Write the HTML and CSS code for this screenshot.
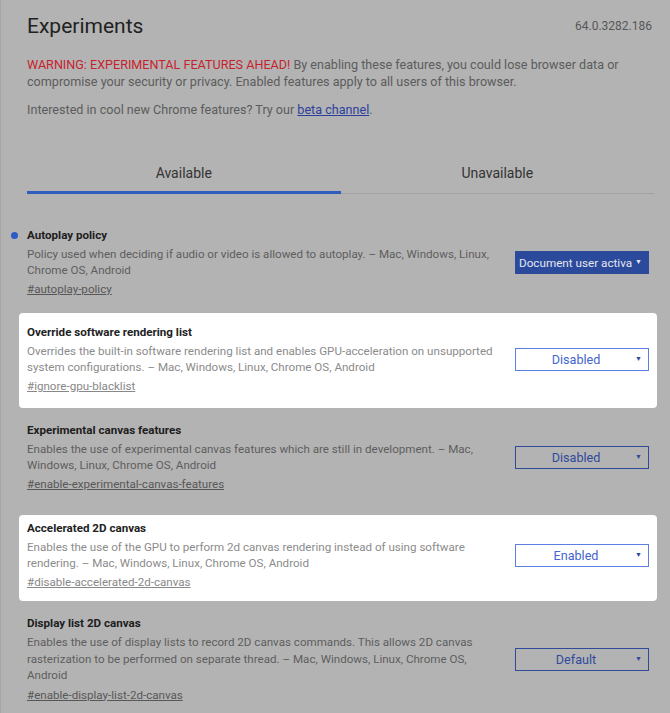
FILE: index.html
```html
<!DOCTYPE html>
<html>
<head>
<meta charset="utf-8">
<link rel="stylesheet" href="styles.css">
</head>
<body>
<div class="page">
  <header class="head">
    <h1 class="title">Experiments</h1>
    <span class="version">64.0.3282.186</span>
  </header>
  <p class="warning"><span class="warn-red">WARNING: EXPERIMENTAL FEATURES AHEAD!</span> By enabling these features, you could lose browser data or compromise your security or privacy. Enabled features apply to all users of this browser.</p>
  <p class="interest">Interested in cool new Chrome features? Try our <a class="beta" href="#">beta channel</a>.</p>

  <div class="tabs">
    <div class="tab active">Available</div>
    <div class="tab">Unavailable</div>
  </div>

  <div class="items">
    <div class="item first">
      <div class="info">
        <div class="name"><span class="dot"></span>Autoplay policy</div>
        <div class="desc">Policy used when deciding if audio or video is allowed to autoplay. – Mac, Windows, Linux, Chrome OS, Android</div>
        <a class="anchor" href="#">#autoplay-policy</a>
      </div>
      <div class="select filled"><span class="sel-text">Document user activa</span><span class="arrow">▼</span></div>
    </div>

    <div class="item card card1">
      <div class="info">
        <div class="name">Override software rendering list</div>
        <div class="desc">Overrides the built-in software rendering list and enables GPU-acceleration on unsupported system configurations. – Mac, Windows, Linux, Chrome OS, Android</div>
        <a class="anchor" href="#">#ignore-gpu-blacklist</a>
      </div>
      <div class="select"><span class="sel-text">Disabled</span><span class="arrow">▼</span></div>
    </div>

    <div class="item third">
      <div class="info">
        <div class="name">Experimental canvas features</div>
        <div class="desc">Enables the use of experimental canvas features which are still in development. – Mac, Windows, Linux, Chrome OS, Android</div>
        <a class="anchor" href="#">#enable-experimental-canvas-features</a>
      </div>
      <div class="select"><span class="sel-text">Disabled</span><span class="arrow">▼</span></div>
    </div>

    <div class="item card card2">
      <div class="info">
        <div class="name">Accelerated 2D canvas</div>
        <div class="desc">Enables the use of the GPU to perform 2d canvas rendering instead of using software rendering. – Mac, Windows, Linux, Chrome OS, Android</div>
        <a class="anchor" href="#">#disable-accelerated-2d-canvas</a>
      </div>
      <div class="select"><span class="sel-text">Enabled</span><span class="arrow">▼</span></div>
    </div>

    <div class="item fifth">
      <div class="info">
        <div class="name">Display list 2D canvas</div>
        <div class="desc">Enables the use of display lists to record 2D canvas commands. This allows 2D canvas rasterization to be performed on separate thread. – Mac, Windows, Linux, Chrome OS, Android</div>
        <a class="anchor" href="#">#enable-display-list-2d-canvas</a>
      </div>
      <div class="select"><span class="sel-text">Default</span><span class="arrow">▼</span></div>
    </div>
  </div>
</div>
</body>
</html>
```

FILE: styles.css
```css
html, body {
  margin: 0;
  padding: 0;
}
body {
  background: #b3b3b3;
  font-family: Roboto, "Liberation Sans", Arial, sans-serif;
  color: #5c5c5c;
  height: 713px;
  overflow: hidden;
  box-shadow: inset 1px 0 0 #a6a6a6;
}
.page {
  width: 638px;
  margin-left: 19px;
  padding-top: 13px;
}
.head {
  display: flex;
  justify-content: space-between;
  align-items: center;
  padding: 0 5px 0 8px;
  height: 26px;
}
.title {
  margin: 0;
  font-size: 21px;
  font-weight: 400;
  color: #222;
  line-height: 26px;
}
.version {
  font-size: 12px;
  color: #575757;
}
.warning {
  margin: 17px 0 0;
  padding: 0 8px;
  font-size: 12.6px;
  line-height: 17px;
  color: #5c5c5c;
}
.warn-red {
  color: #c81f2d;
}
.interest {
  margin: 11px 0 0;
  padding: 0 8px;
  font-size: 12.6px;
  line-height: 17px;
}
.beta {
  color: #2c3f9d;
  text-decoration: underline;
}
.tabs {
  display: flex;
  margin: 0 3px 0 8px;
  padding-top: 46px;
}
.tab {
  flex: 1;
  text-align: center;
  font-size: 14px;
  color: #333;
  line-height: 18px;
  padding-bottom: 11px;
  border-bottom: 1px solid #a2a2a2;
}
.tab.active {
  border-bottom: 3px solid #2f5cbd;
  padding-bottom: 9px;
}
.items {
  margin-top: 22px;
}
.item {
  display: flex;
  align-items: center;
  padding: 12px 8px 16px;
}
.item.card {
  background: #fff;
  border-radius: 4px;
}
.card1 {
  padding-bottom: 14px;
}
.third {
  padding-top: 15px;
  padding-bottom: 23px;
}
.card2 {
  padding-top: 6px;
  padding-bottom: 11px;
}
.fifth {
  padding-top: 15px;
}
.info {
  flex: 1;
  min-width: 0;
  margin-right: 12px;
}
.name {
  position: relative;
  font-size: 11.6px;
  font-weight: 700;
  color: #1d1d1d;
  line-height: 14px;
}
.dot {
  position: absolute;
  left: -16px;
  top: 4px;
  width: 7px;
  height: 7px;
  border-radius: 50%;
  background: #2c5bc6;
}
.desc {
  margin-top: 4px;
  font-size: 11.6px;
  line-height: 16px;
  color: #5e5e5e;
}
.fifth .desc {
  line-height: 16.5px;
}
.anchor {
  display: inline-block;
  margin-top: 2px;
  font-size: 11.6px;
  line-height: 16px;
  color: #575757;
  text-decoration: underline;
}
.card .name {
  color: #222;
}
.card .desc {
  color: #8b8b8b;
}
.card .anchor {
  color: #888;
}
.select {
  flex-shrink: 0;
  position: relative;
  box-sizing: border-box;
  width: 134px;
  height: 23px;
  border: 1px solid #2e4a99;
  display: flex;
  align-items: center;
  justify-content: center;
  padding-right: 12px;
  font-size: 12.6px;
  color: #2f4a9c;
}
.card .select {
  border-color: #5b80e2;
  color: #4465cc;
}
.select.filled {
  background: #2b4a9c;
  color: #e4e6f0;
  justify-content: flex-start;
  padding-left: 3px;
  padding-right: 0;
  white-space: nowrap;
  font-size: 11.7px;
}
.arrow {
  position: absolute;
  right: 6px;
  top: 6px;
  font-size: 7px;
  color: #2e4a99;
  line-height: 9px;
}
.filled .arrow {
  color: #e4e6f0;
  right: 6px;
}
```
